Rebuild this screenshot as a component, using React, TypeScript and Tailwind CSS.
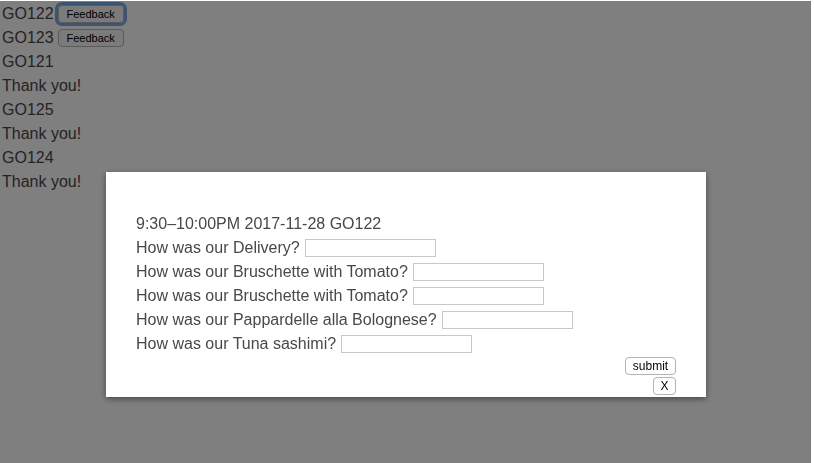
const orders = [
  { id: "GO122", done: false, focused: true },
  { id: "GO123", done: false, focused: false },
  { id: "GO121", done: true },
  { id: "GO125", done: true },
  { id: "GO124", done: true },
];

const questions = [
  "Delivery",
  "Bruschette with Tomato",
  "Bruschette with Tomato",
  "Pappardelle alla Bolognese",
  "Tuna sashimi",
];

function SmallButton({ label, focused, className }: { label: string; focused?: boolean; className?: string }) {
  return (
    <button
      type="button"
      className={
        "h-[18px] rounded-[4px] border border-[#b4b4b4] bg-[#f6f6f6] text-[11px] leading-none text-black " +
        (focused ? "outline-[3px] outline-solid outline-[#7aa7e4] outline-offset-0 " : "") +
        (className ?? "")
      }
    >
      {label}
    </button>
  );
}

export default function App() {
  return (
    <div className="relative min-h-[463px] bg-white font-['Liberation_Sans',Arial,sans-serif] text-[16px] leading-6 text-[#484848]">
      <div className="pl-[2px] pt-[2px]">
        {orders.map((o) => (
          <div key={o.id}>
            <div className="flex h-6 items-center gap-[4px]">
              <span>{o.id}</span>
              {!o.done && <SmallButton label="Feedback" focused={o.focused} className="w-[66px]" />}
            </div>
            {o.done && <div className="h-6">Thank you!</div>}
          </div>
        ))}
      </div>

      {/* overlay + modal */}
      <div className="fixed top-[1px] left-0 right-[3px] bottom-0 bg-black/50">
        <div className="ml-[106px] mt-[171px] w-[600px] bg-white pt-[40px] pb-[2px] pl-[30px] pr-[30px] shadow-[0_2px_6px_rgba(0,0,0,0.45)]">
          <div className="h-6">9:30–10:00PM 2017-11-28 GO122</div>
          {questions.map((q, i) => (
            <div key={i} className="flex h-6 items-center">
              <span>How was our {q}?</span>
              <input type="text" className="ml-[5px] h-[18px] w-[131px] border border-[#c8c8c8] bg-white" />
            </div>
          ))}
          <div className="mt-[1px] flex flex-col items-end gap-[2px]">
            <SmallButton label="submit" className="w-[51px] h-[17px] text-[12px] bg-white" />
            <SmallButton label="X" className="w-[23px] text-[12px] bg-white" />
          </div>
        </div>
      </div>
    </div>
  );
}
